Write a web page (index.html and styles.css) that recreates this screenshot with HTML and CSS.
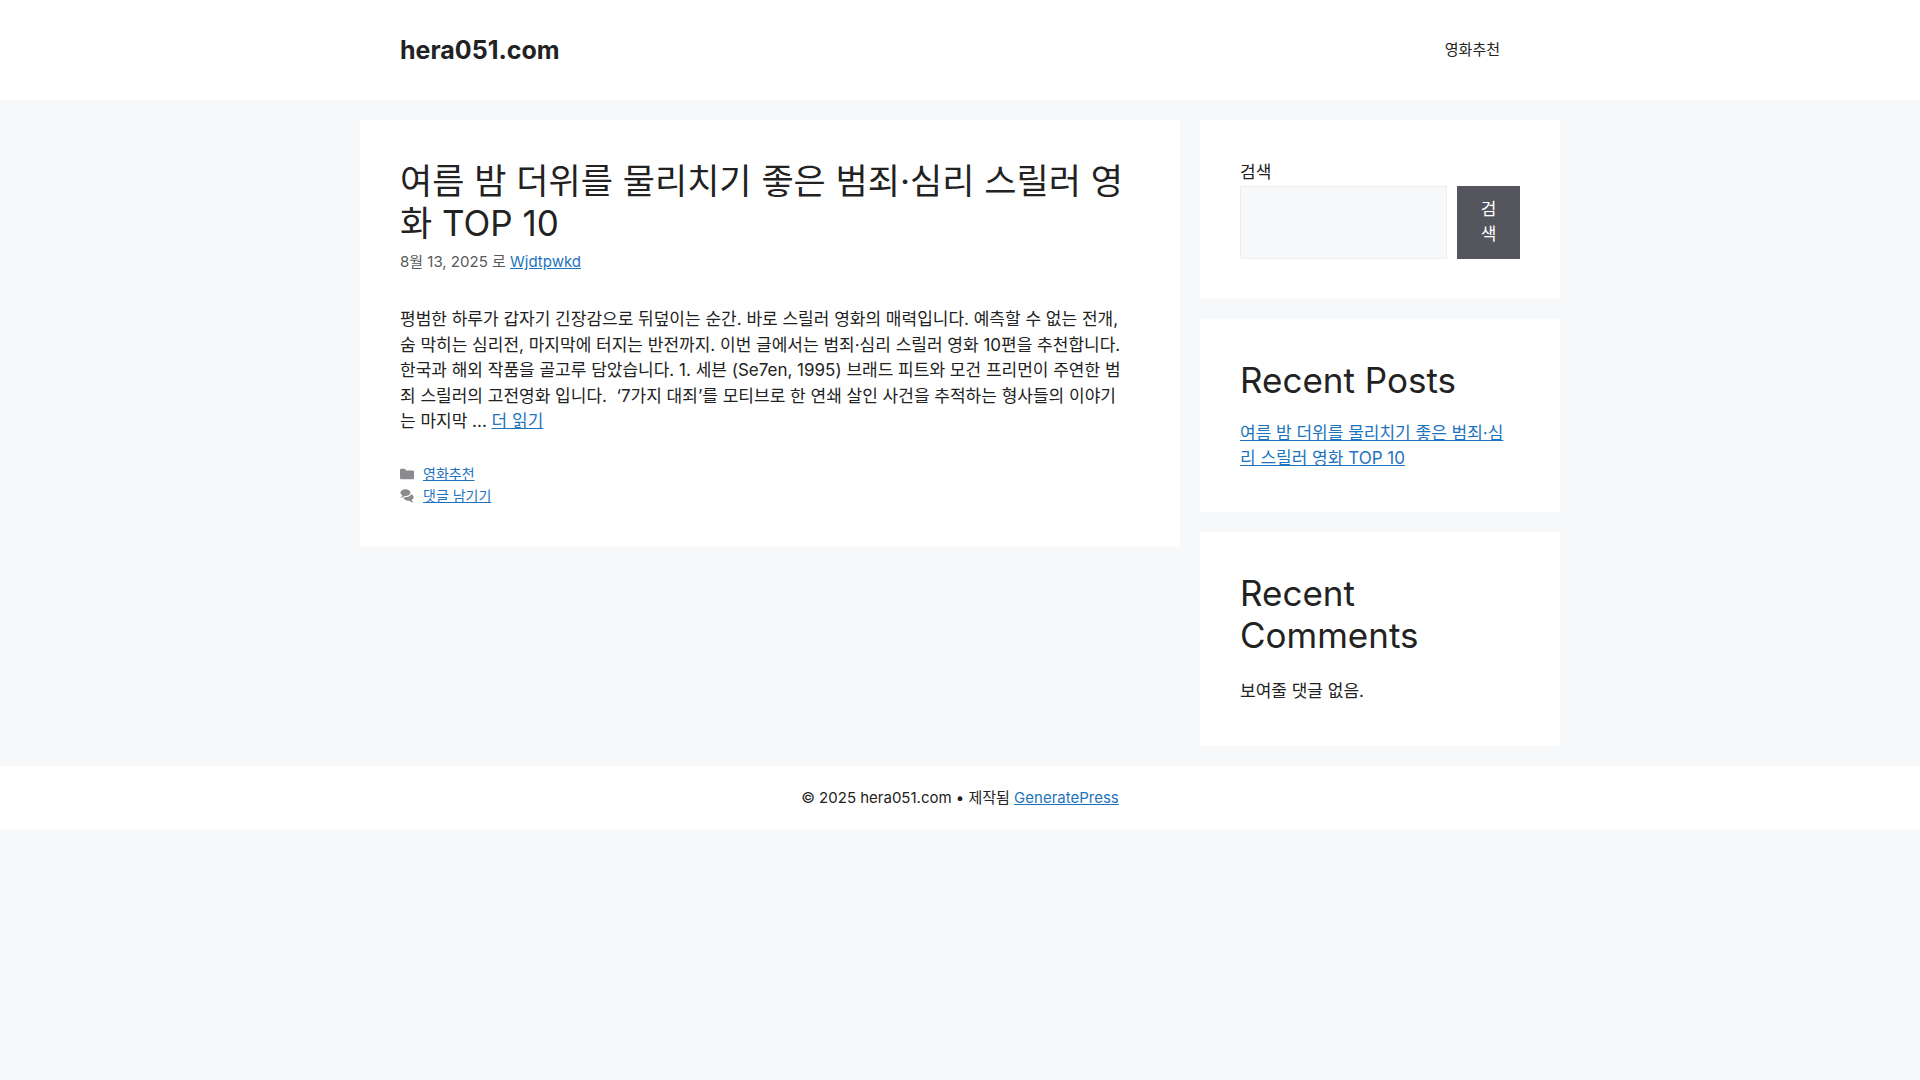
FILE: index.html
```html
<!DOCTYPE html>
<html lang="ko">
<head>
    <meta charset="UTF-8">
    <meta name="viewport" content="width=device-width, initial-scale=1.0">
    <title>hera051.com</title>
    <link rel="stylesheet" href="styles.css">
</head>
<body>
    <header class="site-header">
        <div class="inside-header">
            <p class="main-title"><a href="#">hera051.com</a></p>
            <nav class="main-navigation">
                <a href="#">영화추천</a>
            </nav>
        </div>
    </header>

    <div class="site-content">
        <main class="site-main">
            <article class="post box">
                <h2 class="entry-title"><a href="#">여름 밤 더위를 물리치기 좋은 범죄·심리 스릴러 영화 TOP 10</a></h2>
                <div class="entry-meta">
                    <time datetime="2025-08-13">8월 13, 2025</time> 로 <a href="#">Wjdtpwkd</a>
                </div>
                <div class="entry-summary">
                    <p>평범한 하루가 갑자기 긴장감으로 뒤덮이는 순간. 바로 스릴러 영화의 매력입니다. 예측할 수 없는 전개,<br>
                    숨 막히는 심리전, 마지막에 터지는 반전까지. 이번 글에서는 범죄·심리 스릴러 영화 10편을 추천합니다.<br>
                    한국과 해외 작품을 골고루 담았습니다. 1. 세븐 (Se7en, 1995) 브래드 피트와 모건 프리먼이 주연한 범<br>죄 스릴러의 고전영화 입니다.&nbsp; ‘7가지 대죄’를 모티브로 한 연쇄 살인 사건을 추적하는 형사들의 이야기<br>는 마지막 ... <a href="#">더 읽기</a></p>
                </div>
                <footer class="post-footer">
                    <span class="meta-item">
                        <svg class="icon" viewBox="0 0 512 512" aria-hidden="true"><path d="M0 112c0-26.510 21.490-48 48-48h110.014a48 48 0 0143.592 27.907l12.349 26.791A16 16 0 00228.486 128H464c26.510 0 48 21.490 48 48v224c0 26.510-21.490 48-48 48H48c-26.510 0-48-21.490-48-48V112z"/></svg>
                        <a href="#">영화추천</a>
                    </span>
                    <span class="meta-item">
                        <svg class="icon" viewBox="0 0 512 512" aria-hidden="true"><path d="M132.838 329.973a435.298 435.298 0 0016.769-9.004c13.363-7.574 26.587-16.142 37.419-25.507 7.544.597 15.270.925 23.098.925 54.905 0 105.634-15.311 143.285-41.280 23.728-16.365 43.115-37.692 54.155-62.645 54.739 22.205 91.498 63.272 91.498 110.286 0 42.186-29.558 79.498-75.090 102.828 23.460 49.216 75.090 101.709 75.090 101.709s-115.837-38.350-154.424-78.460c-9.956 1.120-20.297 1.758-30.793 1.758-88.727 0-162.927-43.071-181.007-100.610z"/><path d="M383.371 132.502c0 70.603-82.961 127.787-185.216 127.787-10.496 0-20.837-.639-30.793-1.757-38.587 40.093-154.424 78.429-154.424 78.429s51.630-52.472 75.090-101.670c-45.532-23.321-75.090-60.619-75.090-102.789C12.938 61.900 95.900 4.716 198.155 4.716 300.410 4.715 383.370 61.900 383.370 132.502z"/></svg>
                        <a href="#">댓글 남기기</a>
                    </span>
                </footer>
            </article>
        </main>

        <aside class="sidebar">
            <section class="box">
                <form class="search">
                    <label for="search-input">검색</label>
                    <div class="search-row">
                        <input type="search" id="search-input">
                        <button type="submit">검색</button>
                    </div>
                </form>
            </section>
            <section class="box">
                <h2>Recent Posts</h2>
                <ul>
                    <li><a href="#">여름 밤 더위를 물리치기 좋은 범죄·심<br>리 스릴러 영화 TOP 10</a></li>
                </ul>
            </section>
            <section class="box">
                <h2>Recent Comments</h2>
                <p class="no-comments">보여줄 댓글 없음.</p>
            </section>
        </aside>
    </div>

    <footer class="site-info">
        © 2025 hera051.com • 제작됨 <a href="#">GeneratePress</a>
    </footer>
</body>
</html>
```

FILE: styles.css
```css
* {
    box-sizing: border-box;
}

body {
    margin: 0;
    background-color: #f7f8f9;
    color: #222;
    font-family: Inter, "Noto Sans CJK KR", sans-serif;
    font-size: 17px;
    line-height: 1.5;
}

p, h2, ul {
    margin: 0;
    padding: 0;
}

a {
    color: #1e73be;
}

h2 {
    margin-bottom: 20px;
    font-size: 35px;
    font-weight: 400;
    line-height: 1.2;
}

.box {
    padding: 40px;
    background-color: #fff;
}

/* Header */
.site-header {
    background-color: #fff;
}

.inside-header {
    display: flex;
    align-items: center;
    justify-content: space-between;
    max-width: 1200px;
    margin: 0 auto;
    padding: 20px 40px;
}

.main-title {
    font-size: 25px;
    font-weight: 700;
    line-height: 1.2;
}

.main-title a,
.main-navigation a,
.entry-title a {
    color: #222;
    text-decoration: none;
}

.main-navigation a {
    display: block;
    padding: 0 20px;
    font-size: 15px;
    line-height: 60px;
}

/* Columns */
.site-content {
    display: flex;
    align-items: flex-start;
    gap: 20px;
    max-width: 1200px;
    margin: 0 auto;
    padding: 20px 0;
}

.site-main {
    flex: 1;
}

.sidebar {
    display: grid;
    grid-template-columns: minmax(0, 1fr);
    gap: 20px;
    width: 30%;
}

/* Post */
.entry-title {
    margin-bottom: 0;
}

.entry-meta {
    margin-top: 7px;
    color: #595959;
    font-size: 15px;
    line-height: 22px;
}

.entry-summary {
    margin-top: 34px;
}

.post-footer {
    margin-top: 28px;
    font-size: 14px;
    line-height: 22px;
}

.meta-item {
    display: flex;
    align-items: center;
    gap: 9px;
}

.icon {
    width: 14px;
    height: 14px;
    fill: #8a8a8f;
}

/* Widgets */
.search label {
    display: block;
}

.search-row {
    display: flex;
    gap: 10px;
}

.search input {
    flex: 1;
    min-width: 0;
    padding: 10px 15px;
    border: 1px solid #eee;
    background-color: #f7f8f9;
    font: inherit;
}

.search button {
    width: 63px;
    padding: 10px 20px;
    border: 1px solid #55555e;
    background-color: #55555e;
    color: #fff;
    font: inherit;
}

.sidebar ul {
    list-style: none;
}

.no-comments {
    line-height: 30px;
}

/* Footer */
.site-info {
    padding: 20px 40px;
    background-color: #fff;
    font-size: 15px;
    line-height: 23px;
    text-align: center;
}
```
